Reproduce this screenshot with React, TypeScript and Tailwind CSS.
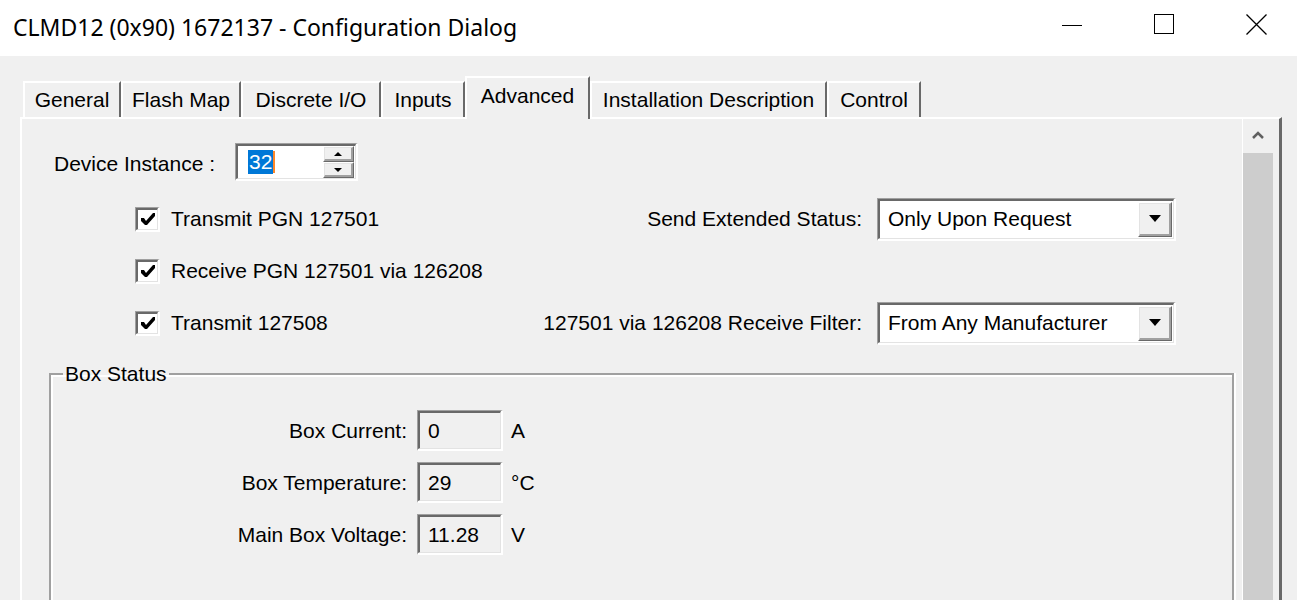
import React from "react";

const tabs = [
  { label: "General", w: "w-[98px]" },
  { label: "Flash Map", w: "w-[120px]" },
  { label: "Discrete I/O", w: "w-[140px]" },
  { label: "Inputs", w: "w-[84px]" },
  { label: "Advanced", w: "w-[125px]", active: true },
  { label: "Installation Description", w: "w-[237px]" },
  { label: "Control", w: "w-[94px]" },
];

function Sunken({ className = "", children }: { className?: string; children?: React.ReactNode }) {
  return (
    <div className={`border-t border-l border-[#a0a0a0] border-b-2 border-r-2 border-b-white border-r-white ${className}`}>
      <div className="w-full h-full border-t-2 border-l-2 border-[#696969] border-b border-r border-b-[#e3e3e3] border-r-[#e3e3e3] flex items-center">
        {children}
      </div>
    </div>
  );
}

function Raised({ className = "", children }: { className?: string; children?: React.ReactNode }) {
  return (
    <div className={`border-t border-l border-white border-b border-r border-b-[#696969] border-r-[#696969] ${className}`}>
      <div className="w-full h-full border-t border-l border-[#e3e3e3] border-b-2 border-r-2 border-b-[#a0a0a0] border-r-[#a0a0a0] bg-[#f0f0f0] flex items-center justify-center">
        {children}
      </div>
    </div>
  );
}

function CheckBox() {
  return (
    <Sunken className="w-[25px] h-[25px] shrink-0">
      <div className="w-full h-full bg-white flex items-center justify-center">
        <svg width="16" height="14" viewBox="0 0 16 14">
          <polygon points="1,6 4,6 6,9 13,1 15,1 15,4 7,13 5,13 1,9" fill="#000" />
        </svg>
      </div>
    </Sunken>
  );
}

function Combo({ value }: { value: string }) {
  return (
    <Sunken className="w-[299px] h-[43px] shrink-0">
      <div className="flex-1 h-full bg-white flex items-center pl-[8px]">{value}</div>
      <div className="h-full bg-white pr-[1px] py-[1px] flex items-center">
        <Raised className="w-[34px] h-[35px]">
          <svg width="12" height="7" viewBox="0 0 12 7">
            <polygon points="0,0 12,0 6,7" fill="#000" />
          </svg>
        </Raised>
      </div>
    </Sunken>
  );
}

function StatusRow({ label, value, unit }: { label: string; value: string; unit: string }) {
  return (
    <div className="flex items-center h-[41px] mb-[11px]">
      <div className="w-[344px] text-right">{label}</div>
      <Sunken className="w-[86px] h-[41px] ml-[10px] shrink-0">
        <div className="pl-[8px] bg-[#f0f0f0]">{value}</div>
      </Sunken>
      <div className="ml-[8px]">{unit}</div>
    </div>
  );
}

export default function App() {
  return (
    <div className="w-[1297px] h-[600px] overflow-hidden bg-[#f0f0f0] text-black text-[21px] leading-[24px] font-['Liberation_Sans',Arial,sans-serif]">
      {/* title bar */}
      <div className="h-[56px] bg-white flex items-center overflow-hidden">
        <div className="pl-[13px] pb-[2px] text-[23px] font-['Noto_Sans',sans-serif] text-black">
          CLMD12 (0x90) 1672137 - Configuration Dialog
        </div>
        <div className="ml-auto mr-[-5px] flex h-full">
          <div className="w-[92px] h-full flex items-center justify-center pb-[6px]">
            <div className="w-[20px] h-px bg-black" />
          </div>
          <div className="w-[92px] h-full flex items-center justify-center pb-[8px]">
            <div className="w-[20px] h-[20px] border border-black" />
          </div>
          <div className="w-[92px] h-full flex items-center justify-center pb-[8px]">
            <svg width="21" height="21" viewBox="0 0 21 21">
              <path d="M0.5 0.5 L20.5 20.5 M20.5 0.5 L0.5 20.5" stroke="#000" strokeWidth="1.3" fill="none" />
            </svg>
          </div>
        </div>
      </div>

      {/* tab strip */}
      <div className="h-[61px] flex items-end pl-[23px] relative z-10">
        {tabs.map((t) =>
          t.active ? (
            <div
              key={t.label}
              className={`${t.w} h-[43px] -mb-[2px] bg-[#f0f0f0] border-t-2 border-l-2 border-white border-r-2 border-r-[#696969] flex justify-center pt-[6px]`}
            >
              {t.label}
            </div>
          ) : (
            <div
              key={t.label}
              className={`${t.w} h-[36px] border-t-2 border-l-2 border-white border-r-2 border-r-[#696969] flex justify-center pt-[5px]`}
            >
              {t.label}
            </div>
          )
        )}
      </div>

      {/* tab panel */}
      <div className="ml-[20px] w-[1262px] h-[483px] border-t-2 border-l-2 border-white border-r-[3px] border-r-[#696969] flex">
        <div className="flex-1 flex flex-col overflow-hidden">
          <div className="mt-[24px] h-[38px] flex items-center pl-[32px]">
            <div className="w-[181px] pt-[3px]">Device Instance :</div>
            <Sunken className="w-[123px] h-[38px]">
              <div className="flex-1 h-full bg-white flex items-center pl-[10px]">
                <span className="bg-[#0078d7] text-white px-[1px]">32</span>
                <span className="w-[2px] h-[22px] bg-[#ff8728]" />
              </div>
              <div className="h-full bg-white flex flex-col pr-[1px]">
                <Raised className="w-[31px] h-[16px]">
                  <svg width="8" height="4" viewBox="0 0 8 4">
                    <polygon points="4,0 8,4 0,4" fill="#000" />
                  </svg>
                </Raised>
                <Raised className="w-[31px] h-[16px]">
                  <svg width="8" height="4" viewBox="0 0 8 4">
                    <polygon points="0,0 8,0 4,4" fill="#000" />
                  </svg>
                </Raised>
              </div>
            </Sunken>
          </div>

          <div className="mt-[12px] flex flex-col">
            <div className="h-[52px] flex items-center">
              <div className="pl-[113px] flex items-center">
                <CheckBox />
                <div className="ml-[11px]">Transmit PGN 127501</div>
              </div>
              <div className="ml-auto pr-[66px] flex items-center">
                <div className="text-right">Send Extended Status:</div>
                <div className="ml-[15px]">
                  <Combo value="Only Upon Request" />
                </div>
              </div>
            </div>
            <div className="h-[52px] flex items-center">
              <div className="pl-[113px] flex items-center">
                <CheckBox />
                <div className="ml-[11px]">Receive PGN 127501 via 126208</div>
              </div>
            </div>
            <div className="h-[52px] flex items-center">
              <div className="pl-[113px] flex items-center">
                <CheckBox />
                <div className="ml-[11px]">Transmit 127508</div>
              </div>
              <div className="ml-auto pr-[66px] flex items-center">
                <div className="text-right">127501 via 126208 Receive Filter:</div>
                <div className="ml-[15px]">
                  <Combo value="From Any Manufacturer" />
                </div>
              </div>
            </div>
          </div>

          <fieldset className="mt-[13px] ml-[27px] mr-[8px] h-[300px] shrink-0 border-2 border-[#a0a0a0] border-b-0 pl-[12px] shadow-[inset_2px_2px_0_#ffffff,2px_0_0_#ffffff]">
            <legend className="px-[2px]">Box Status</legend>
            <div className="mt-[24px]">
              <StatusRow label="Box Current:" value="0" unit="A" />
              <StatusRow label="Box Temperature:" value="29" unit="°C" />
              <StatusRow label="Main Box Voltage:" value="11.28" unit="V" />
            </div>
          </fieldset>
        </div>

        {/* scrollbar */}
        <div className="w-[37px] border-l border-white flex flex-col">
          <div className="h-[34px] w-[30px] flex items-center justify-center pb-[2px]">
            <svg width="12" height="8" viewBox="0 0 12 8">
              <polyline points="1,7 6,2 11,7" stroke="#606060" strokeWidth="2.5" fill="none" />
            </svg>
          </div>
          <div className="w-[30px] flex-1 bg-[#cdcdcd]" />
        </div>
      </div>
    </div>
  );
}
